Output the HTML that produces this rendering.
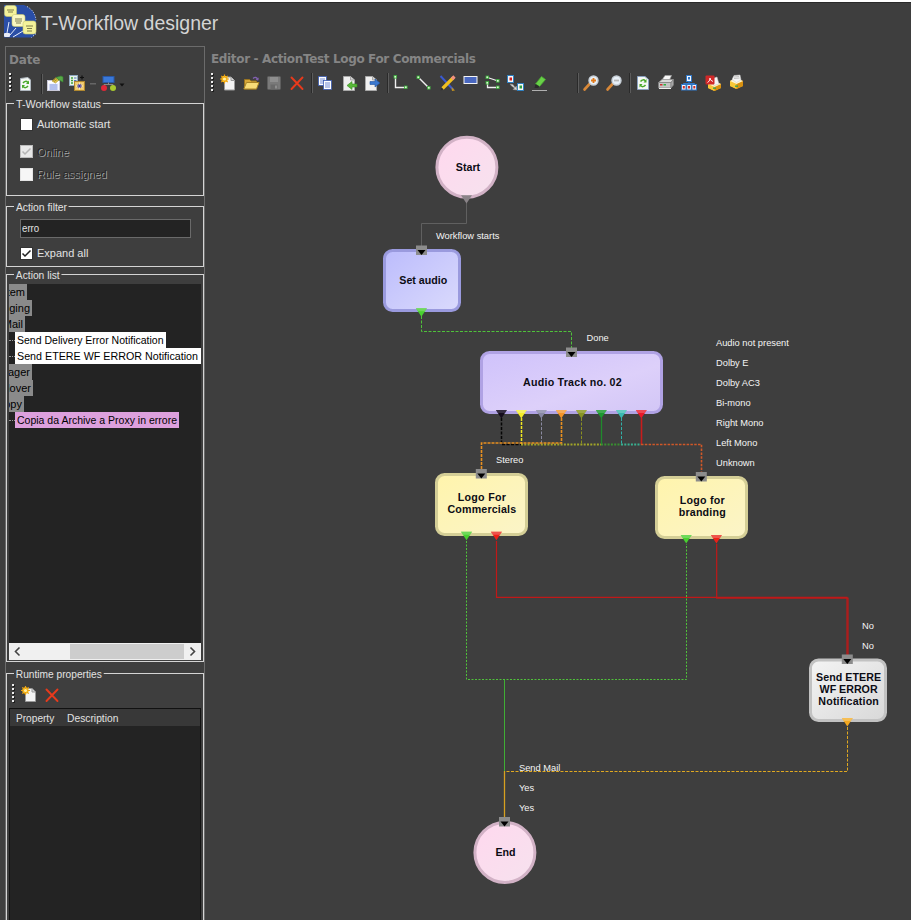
<!DOCTYPE html>
<html><head><meta charset="utf-8"><title>T-Workflow designer</title>
<style>
html,body{margin:0;padding:0;}
body{width:911px;height:920px;overflow:hidden;background:#3e3e3e;font-family:"Liberation Sans",sans-serif;font-size:12px;color:#e6e6e6;position:relative;}
.abs{position:absolute;}
#topstrip{left:0;top:0;width:911px;height:2px;background:#fff;}
#topdark{left:0;top:2px;width:911px;height:1px;background:#2a2a2a;}
#title{left:41px;top:11px;font-size:19.5px;color:#d4d4d4;white-space:nowrap;line-height:24px;}
#leftpanel{left:5px;top:46px;width:200px;height:900px;border:1px solid #6b6b6b;box-sizing:border-box;}
.hd{font-family:"DejaVu Sans","Liberation Sans",sans-serif;font-weight:bold;font-size:12px;color:#858585;white-space:nowrap;line-height:16px;}
.gb{border:1px solid #d4d4d4;box-sizing:border-box;}
.gbl{background:#3e3e3e;padding:0 2px;font-size:11px;transform-origin:0 0;line-height:14px;color:#e2e2e2;white-space:nowrap;}
.cb{width:13px;height:13px;background:#fff;border:1px solid #333;box-sizing:border-box;}
.lbl{font-size:11px;line-height:14px;white-space:nowrap;color:#e2e2e2;}
.row{height:16px;line-height:16px;font-size:11px;position:absolute;white-space:nowrap;color:#000;}
.g{background:#8a8a8a;overflow:hidden;}
.sx{position:absolute;transform-origin:0 0;transform:scaleX(0.955);white-space:nowrap;}
</style></head><body>
<div class="abs" id="topstrip"></div><div class="abs" id="topdark"></div>
<svg class="abs" style="left:3px;top:4px;" width="35" height="35" viewBox="0 0 35 35">
<path d="M1 1 H21 Q32 5 33 16 V30 L29 33.500 H1 Z" fill="#2a4ea6"/>
<path d="M24 2.500 Q32 7 33 16 M33 29.500 L28.500 33.500" fill="none" stroke="#e4eaf8" stroke-width="0.900" stroke-dasharray="1.200 1.500"/>
<path d="M6 18 L4 29 M13 24 L7 31 M20 27 L10 33" stroke="#e8eefc" stroke-width="1"/>
<rect x="1" y="29" width="6" height="4" rx="1" fill="#e8ecf8"/>
<rect x="1.500" y="1.500" width="12" height="11" rx="2.500" fill="#f4f29a" stroke="#c8c670" stroke-width="0.600"/>
<rect x="9" y="10.500" width="13" height="12" rx="2.500" fill="#f8f6c0" stroke="#c8c670" stroke-width="0.600"/>
<rect x="20" y="17" width="13" height="13" rx="2.500" fill="#f4f29a" stroke="#c8c670" stroke-width="0.600"/>
<path d="M4 6 H11 M5 8 H10 M12 15 H19 M12 17 H19 M13 19 H18 M23 22 H30 M24 24.500 H29 M24 27 H29" stroke="#3c3c1c" stroke-width="0.650"/>
</svg>
<div class="abs" id="title">T-Workflow designer</div>
<div class="abs" id="leftpanel"></div>
<div class="abs hd" style="left:9px;top:52px;letter-spacing:-0.2px;">Date</div>
<svg class="abs" style="left:0;top:680px;" width="100" height="26" viewBox="0 680 100 26"><rect x="13" y="685" width="2" height="2" fill="#1c1c1c"/><rect x="12" y="684" width="2" height="2" fill="#ececec"/><rect x="13" y="689" width="2" height="2" fill="#1c1c1c"/><rect x="12" y="688" width="2" height="2" fill="#ececec"/><rect x="13" y="693" width="2" height="2" fill="#1c1c1c"/><rect x="12" y="692" width="2" height="2" fill="#ececec"/><rect x="13" y="697" width="2" height="2" fill="#1c1c1c"/><rect x="12" y="696" width="2" height="2" fill="#ececec"/><rect x="13" y="701" width="2" height="2" fill="#1c1c1c"/><rect x="12" y="700" width="2" height="2" fill="#ececec"/><g transform="translate(21 686)"><path d="M4.500 2.500 H11 L14.500 6 V15.500 H4.500 Z" fill="#f4f4f4" stroke="#9a9a9a"/><path d="M11 2.500 V6 H14.500" fill="#d8d8d8" stroke="#9a9a9a"/><circle cx="4.500" cy="4.500" r="3.200" fill="#f8c820"/><path d="M4.500 0 V9 M0 4.500 H9 M1.300 1.300 L7.700 7.700 M7.700 1.300 L1.300 7.700" stroke="#f0a010" stroke-width="1.200"/><circle cx="4.500" cy="4.500" r="1.600" fill="#fff0a0"/></g><g transform="translate(44 687)"><path d="M2.500 2.500 L13.500 14 M13.500 2.500 L2.500 14" stroke="#e83a1c" stroke-width="1.900" stroke-linecap="round"/></g></svg>
<!-- status group -->
<div class="abs gb" style="left:6px;top:103px;width:198px;height:93px;"></div>
<div class="abs gbl" style="left:14px;top:97px;transform:scaleX(0.975);">T-Workflow status</div>
<div class="abs cb" style="left:20px;top:118px;"></div><div class="abs lbl" style="left:37px;top:117px;">Automatic start</div>
<div class="abs cb" style="left:20px;top:145px;background:#e8e8e8;border-color:#bcbcbc;"><svg width="11" height="11" style="display:block"><path d="M1.500 5.500 L4 8 L9.500 2.500" fill="none" stroke="#b4b4b4" stroke-width="1.500"/></svg></div><div class="abs lbl" style="left:37px;top:145px;color:#262626;text-shadow:1px 1px 0 #a4a4a4;">Online</div>
<div class="abs cb" style="left:20px;top:168px;background:#f6f6f6;border-color:#e4e4e4;"></div><div class="abs lbl" style="left:37px;top:167px;color:#262626;text-shadow:1px 1px 0 #a4a4a4;">Rule assigned</div>
<!-- filter group -->
<div class="abs gb" style="left:6px;top:206px;width:198px;height:61px;"></div>
<div class="abs gbl" style="left:14px;top:200px;transform:scaleX(0.94);">Action filter</div>
<div class="abs" style="left:20px;top:219px;width:171px;height:19px;background:#232323;border:1px solid #6a6a6a;box-sizing:border-box;"></div>
<div class="abs lbl" style="left:22px;top:221px;transform-origin:0 0;transform:scaleX(0.88);">erro</div>
<div class="abs cb" style="left:20px;top:247px;"><svg width="11" height="11" style="display:block"><path d="M1.500 5.500 L4 8 L9.500 2.500" fill="none" stroke="#222" stroke-width="1.500"/></svg></div><div class="abs lbl" style="left:37px;top:246px;">Expand all</div>
<!-- action list -->
<div class="abs gb" style="left:6px;top:274px;width:198px;height:388px;"></div>
<div class="abs gbl" style="left:14px;top:268px;transform:scaleX(0.93);">Action list</div>
<div class="abs" id="alist" style="left:9px;top:284px;width:192px;height:359px;background:#232323;overflow:hidden;">
<div class="row g" style="left:0;top:0;width:18px;"><span style="position:absolute;right:2px;">stem</span></div>
<div class="row g" style="left:0;top:16px;width:23px;"><span style="position:absolute;right:2px;">gging</span></div>
<div class="row g" style="left:0;top:32px;width:16px;"><span style="position:absolute;right:2px;">Mail</span></div>
<div class="row" style="left:0;top:56px;width:6px;height:0;border-top:1px dotted #999;"></div>
<div class="row" style="left:6px;top:48px;width:151px;background:#fff;color:#000;"><span class="sx" style="left:2px;">Send Delivery Error Notification</span></div>
<div class="row" style="left:0;top:72px;width:6px;height:0;border-top:1px dotted #999;"></div>
<div class="row" style="left:6px;top:64px;width:186px;background:#fff;color:#000;"><span class="sx" style="left:2px;transform:scaleX(0.974);">Send ETERE WF ERROR Notification</span></div>
<div class="row g" style="left:0;top:80px;width:23px;"><span style="position:absolute;right:2px;">nager</span></div>
<div class="row g" style="left:0;top:96px;width:24px;"><span style="position:absolute;right:2px;">llover</span></div>
<div class="row g" style="left:0;top:112px;width:15px;"><span style="position:absolute;right:2px;">opy</span></div>
<div class="row" style="left:0;top:136px;width:6px;height:0;border-top:1px dotted #999;"></div>
<div class="row" style="left:6px;top:128px;width:164px;background:#dda0dd;color:#000;"><span class="sx" style="left:2px;">Copia da Archive a Proxy in errore</span></div>
</div>
<div class="abs" style="left:9px;top:643px;width:192px;height:17px;background:#f0f0f0;"></div>
<div class="abs" style="left:70px;top:644px;width:114px;height:15px;background:#cdcdcd;"></div>
<svg class="abs" style="left:9px;top:643px;" width="192" height="17"><path d="M10.500 4.500 L6.500 8.500 L10.500 12.500 M181.500 4.500 L185.500 8.500 L181.500 12.500" fill="none" stroke="#444" stroke-width="1.6"/></svg>
<!-- runtime -->
<div class="abs gb" style="left:6px;top:673px;width:198px;height:260px;"></div>
<div class="abs gbl" style="left:14px;top:667px;transform:scaleX(0.925);">Runtime properties</div>
<div class="abs" style="left:9px;top:708px;width:192px;height:230px;background:#232323;border:1px solid #111;box-sizing:border-box;"></div>
<div class="abs" style="left:10px;top:709px;width:190px;height:17px;background:#383838;"></div>
<div class="abs lbl" style="left:16px;top:711px;transform-origin:0 0;transform:scaleX(0.92);">Property</div><div class="abs lbl" style="left:67px;top:711px;transform-origin:0 0;transform:scaleX(0.935);">Description</div>
<!-- editor -->
<div class="abs hd" style="left:211px;top:51px;letter-spacing:-0.35px;">Editor - ActionTest Logo For Commercials</div>
<svg class="abs" id="toolbars" style="left:0;top:70px;" width="911" height="28" viewBox="0 70 911 28"><rect x="10" y="74" width="2" height="2" fill="#1c1c1c"/><rect x="9" y="73" width="2" height="2" fill="#ececec"/><rect x="10" y="78" width="2" height="2" fill="#1c1c1c"/><rect x="9" y="77" width="2" height="2" fill="#ececec"/><rect x="10" y="82" width="2" height="2" fill="#1c1c1c"/><rect x="9" y="81" width="2" height="2" fill="#ececec"/><rect x="10" y="86" width="2" height="2" fill="#1c1c1c"/><rect x="9" y="85" width="2" height="2" fill="#ececec"/><rect x="10" y="90" width="2" height="2" fill="#1c1c1c"/><rect x="9" y="89" width="2" height="2" fill="#ececec"/><g transform="translate(19 76)"><path d="M1.500 2.500 L9 1.500 L11.500 4 V14.500 H1.500 Z" fill="#f4f8f4" stroke="#b0b8c0"/><path d="M4 7 Q6.500 4 9 6.500 M9 10 Q6.500 13 4 10.500" fill="none" stroke="#48a828" stroke-width="1.500"/><path d="M10 4.500 V8 H7 Z M3 12.500 V9 H6 Z" fill="#48a828"/></g><rect x="41" y="74" width="1" height="20" fill="#2a2a2a"/><rect x="42" y="74" width="1" height="20" fill="#5c5c5c"/><g transform="translate(47 75)"><rect x="0.500" y="5.500" width="12" height="10" fill="#f4f6ff" stroke="#c8c8d8"/><rect x="1" y="6" width="11" height="2" fill="#fff"/><path d="M2.500 10 H10.500 M2.500 12 H10.500 M2.500 14 H10.500" stroke="#5070d0" stroke-width="0.800"/><path d="M5 6 L9 2.500 L12 5 L8.500 8 Z" fill="#e8c848" stroke="#a08828" stroke-width="0.600"/><path d="M9 2.500 L14 1 L16 2 V7 L12 5 Z" fill="#58a848" stroke="#388830" stroke-width="0.600"/><path d="M6 5.500 L9 3.500 M7 6.500 L10 4.500" stroke="#7a6820" stroke-width="0.600"/></g><g transform="translate(69 75)"><rect x="0.500" y="0.500" width="8" height="10" fill="#e8f4e8" stroke="#90a8c0"/><path d="M2 3 H4 M2 5.500 H4 M2 8 H4" stroke="#40a040" stroke-width="1.400"/><path d="M5 3 H7.500 M5 5.500 H7.500 M5 8 H7.500" stroke="#5070c0" stroke-width="1"/><rect x="5.500" y="6.500" width="10" height="9" fill="#f0c868" stroke="#b08830"/><circle cx="10.500" cy="11" r="2.300" fill="#302060"/><path d="M10.500 7.500 V14.500 M7 11 H14 M8 8.500 L13 13.500 M13 8.500 L8 13.500" stroke="#fff" stroke-width="0.700"/><circle cx="10.500" cy="11" r="1.200" fill="#4030a0"/><path d="M11 2.500 H15 M13 0.500 V4.500" stroke="#101010" stroke-width="1.200"/></g><rect x="90" y="83" width="6" height="1.500" fill="#666"/><g transform="translate(100 76)"><rect x="3" y="0.500" width="11" height="6" fill="#3a78d8" stroke="#2858a8"/><path d="M8.500 6.500 V8.500 M4 10 V8.500 H13 V10" fill="none" stroke="#888"/><circle cx="4" cy="12" r="3" fill="#e02838"/><circle cx="13" cy="12" r="3" fill="#a8c830"/></g><path d="M119.500 83.500 H124.500 L122 86.500 Z" fill="#101010"/><rect x="212" y="74" width="2" height="2" fill="#1c1c1c"/><rect x="211" y="73" width="2" height="2" fill="#ececec"/><rect x="212" y="78" width="2" height="2" fill="#1c1c1c"/><rect x="211" y="77" width="2" height="2" fill="#ececec"/><rect x="212" y="82" width="2" height="2" fill="#1c1c1c"/><rect x="211" y="81" width="2" height="2" fill="#ececec"/><rect x="212" y="86" width="2" height="2" fill="#1c1c1c"/><rect x="211" y="85" width="2" height="2" fill="#ececec"/><rect x="212" y="90" width="2" height="2" fill="#1c1c1c"/><rect x="211" y="89" width="2" height="2" fill="#ececec"/><g transform="translate(220 74.5)"><path d="M4.500 2.500 H11 L14.500 6 V15.500 H4.500 Z" fill="#f4f4f4" stroke="#9a9a9a"/><path d="M11 2.500 V6 H14.500" fill="#d8d8d8" stroke="#9a9a9a"/><circle cx="4.500" cy="4.500" r="3.200" fill="#f8c820"/><path d="M4.500 0 V9 M0 4.500 H9 M1.300 1.300 L7.700 7.700 M7.700 1.300 L1.300 7.700" stroke="#f0a010" stroke-width="1.200"/><circle cx="4.500" cy="4.500" r="1.600" fill="#fff0a0"/></g><g transform="translate(243 75)"><path d="M1.500 4.500 H6.500 L8 6 H13.500 V14 H1.500 Z" fill="#d8a838" stroke="#9a7420"/><path d="M0.800 14 L3.500 7.500 H16 L13.500 14 Z" fill="#f8dc78" stroke="#a88428"/><path d="M10 3.500 Q13 1 15 4.500" fill="none" stroke="#8060b0" stroke-width="1.300"/><path d="M15.800 2.500 L15.200 5.800 L12.600 4.600 Z" fill="#8060b0"/></g><g transform="translate(266 75)"><rect x="1.500" y="1.500" width="13" height="13" rx="1" fill="#7a7a7a" stroke="#5e5e5e"/><rect x="4" y="2" width="8" height="5" fill="#8e8e8e"/><rect x="4.500" y="9.500" width="7" height="5" fill="#6a6a6a"/><rect x="9" y="10.500" width="2" height="3" fill="#8e8e8e"/></g><g transform="translate(289 75)"><path d="M2.500 2.500 L13.500 14 M13.500 2.500 L2.500 14" stroke="#e83a1c" stroke-width="1.900" stroke-linecap="round"/></g><rect x="311" y="73" width="1" height="20" fill="#2a2a2a"/><rect x="312" y="73" width="1" height="20" fill="#5c5c5c"/><g transform="translate(317 75)"><rect x="1.500" y="1.500" width="8" height="9" fill="#fff" stroke="#3a5ab0" stroke-width="0.800"/><path d="M3 4 H8 M3 6 H8 M3 8 H8" stroke="#4a6ac8" stroke-width="0.800"/><rect x="6.500" y="5.500" width="8" height="9" fill="#fff" stroke="#3a5ab0" stroke-width="0.800"/><path d="M8 8 H13 M8 10 H13 M8 12 H13" stroke="#4a6ac8" stroke-width="0.800"/></g><g transform="translate(341 75)"><path d="M2.500 1.500 H9.500 L13.500 5 V15.500 H2.500 Z" fill="#f0f0f0" stroke="#a8a8a8"/><path d="M9.500 1.500 V5 H13.500" fill="#d4d4d4" stroke="#a8a8a8"/><path d="M16 9 H11 V6.500 L6 10.500 L11 14.500 V12 H16 Z" fill="#58b838" stroke="#3a8a24" stroke-width="0.600"/></g><g transform="translate(364 75)"><path d="M1.500 1.500 H8.500 L12.500 5 V15.500 H1.500 Z" fill="#f0f0f0" stroke="#a8a8a8"/><path d="M8.500 1.500 V5 H12.500" fill="#d4d4d4" stroke="#a8a8a8"/><path d="M6 6.500 H11 V4 L16 8 L11 12 V9.500 H6 Z" fill="#3a78d0" stroke="#2050a0" stroke-width="0.600"/></g><rect x="387" y="73" width="1" height="20" fill="#2a2a2a"/><rect x="388" y="73" width="1" height="20" fill="#5c5c5c"/><g transform="translate(393 75)"><path d="M2.500 2 V12.500 H13" fill="none" stroke="#f0f0f0" stroke-width="1.400"/><rect x="1" y="0.500" width="2.600" height="2.600" fill="#d8f8d0" stroke="#38a838" stroke-width="0.800"/><rect x="11.500" y="11" width="2.600" height="2.600" fill="#d8f8d0" stroke="#38a838" stroke-width="0.800"/></g><g transform="translate(416 75)"><path d="M2.500 2.500 L13 13" fill="none" stroke="#f0f0f0" stroke-width="1.400"/><rect x="1" y="1" width="2.600" height="2.600" fill="#d8f8d0" stroke="#38a838" stroke-width="0.800"/><rect x="11.500" y="11.500" width="2.600" height="2.600" fill="#d8f8d0" stroke="#38a838" stroke-width="0.800"/></g><g transform="translate(439 75)"><path d="M1.500 1 L14 14.500" stroke="#3a5ad0" stroke-width="2"/><path d="M14.500 2.500 L3.500 13.500" stroke="#f0c020" stroke-width="3.200"/><path d="M15.500 1.500 L13 4" stroke="#f09080" stroke-width="3.200"/><path d="M1.500 15.500 L4.500 14.500 L2.500 12.500 Z" fill="#303030"/><path d="M12.500 12 L16 15.500 L13 16 Z" fill="#c09020"/></g><g transform="translate(463 75)"><rect x="1" y="1.500" width="13" height="7" fill="#4a68c0" stroke="#f4f4f4" stroke-width="1"/></g><g transform="translate(485 75)"><path d="M2.500 2.500 L13 6 M2.500 8 V12.500 H13" fill="none" stroke="#f0f0f0" stroke-width="1.300"/><rect x="1" y="1" width="2.600" height="2.600" fill="#d8f8d0" stroke="#38a838" stroke-width="0.800"/><rect x="11.500" y="4.500" width="2.600" height="2.600" fill="#d8f8d0" stroke="#38a838" stroke-width="0.800"/><rect x="1" y="6.500" width="2.600" height="2.600" fill="#d8f8d0" stroke="#38a838" stroke-width="0.800"/><rect x="11.500" y="11" width="2.600" height="2.600" fill="#d8f8d0" stroke="#38a838" stroke-width="0.800"/></g><g transform="translate(507 75)"><rect x="0.500" y="0.500" width="6" height="7" fill="#f8f8f8" stroke="#3080c0"/><rect x="2.500" y="2.500" width="2.500" height="3" fill="#d02020"/><rect x="10.500" y="8.500" width="6" height="7" fill="#f8f8f8" stroke="#3080c0"/><rect x="12.500" y="10.500" width="2.500" height="3" fill="#30a040"/><path d="M3 9 L6 9.500 L8 12.500 L9.500 11 L10 15 L6 14.500 L7.500 13 L4.500 11 Z" fill="#d8d8d8" stroke="#909090" stroke-width="0.500"/></g><g transform="translate(532 75)"><path d="M9.500 1.500 L13.500 4.500 L7.500 11.500 L3.500 9 Z" fill="#68d048" stroke="#48a830" stroke-width="0.800"/><path d="M3.500 9 L7.500 11.500 L6 13 H2.500 Z" fill="#2a2a2a"/><path d="M0 15.500 H15" stroke="#b0b0b0" stroke-width="1"/></g><rect x="577" y="73" width="1" height="20" fill="#2a2a2a"/><rect x="578" y="73" width="1" height="20" fill="#5c5c5c"/><g transform="translate(583 75)"><path d="M1.500 14.500 L7 8.500" stroke="#d88838" stroke-width="2.600" stroke-linecap="round"/><circle cx="10.500" cy="5.500" r="4.500" fill="#e8f0f8" stroke="#c8d0d8" stroke-width="1.400"/><path d="M8 5.500 H13 M10.500 3 V8" stroke="#e07818" stroke-width="1.800"/></g><g transform="translate(606 75)"><path d="M1.500 14.500 L7 8.500" stroke="#d88838" stroke-width="2.600" stroke-linecap="round"/><circle cx="10.500" cy="5.500" r="4.500" fill="#e8f0f8" stroke="#c8d0d8" stroke-width="1.400"/><path d="M8 5.500 H13" stroke="#b8b8b8" stroke-width="1.800"/></g><rect x="629" y="73" width="1" height="20" fill="#2a2a2a"/><rect x="630" y="73" width="1" height="20" fill="#5c5c5c"/><g transform="translate(637 75)"><path d="M0.500 1.500 H8 L11.500 4.500 V14.500 H0.500 Z" fill="#f4f8f4" stroke="#8aa0c0"/><path d="M3.500 6.500 Q6 3.500 8.500 6 M8.500 10 Q6 13 3.500 10.500" fill="none" stroke="#48a828" stroke-width="1.500"/><path d="M9.500 4 V7.500 H6.500 Z M2.500 12.500 V9 H5.500 Z" fill="#48a828"/></g><g transform="translate(658 75)"><path d="M4 5 L7 0.500 H13.500 L11.500 5 Z" fill="#f8f8f8" stroke="#a0a0a0" stroke-width="0.700"/><path d="M0.500 7.500 L4 4.500 H15.500 L13 7.500 Z" fill="#d8d8d8" stroke="#909090" stroke-width="0.700"/><path d="M0.500 7.500 H13 V13 H0.500 Z" fill="#c4c4c4" stroke="#808080" stroke-width="0.700"/><path d="M13 7.500 L15.500 4.500 V10 L13 13 Z" fill="#a8a8a8" stroke="#808080" stroke-width="0.700"/><rect x="2" y="9" width="2.500" height="1.500" fill="#d03030"/><rect x="5.500" y="9" width="2.500" height="1.500" fill="#30b040"/><path d="M1 13.500 H13" stroke="#f0f0f0"/></g><g transform="translate(681 75)"><rect x="5.500" y="0.500" width="5" height="6" fill="#f4f8ff" stroke="#3078c8"/><rect x="7" y="2" width="2" height="2.500" fill="#3078c8"/><path d="M8 6.500 V8.500 M2.500 10 V8.500 H13.500 V10 M8 8.500 V10" fill="none" stroke="#3078c8"/><rect x="0.500" y="9.500" width="4.500" height="5.500" fill="#f4f8ff" stroke="#3078c8"/><rect x="5.800" y="9.500" width="4.500" height="5.500" fill="#f4f8ff" stroke="#3078c8"/><rect x="11" y="9.500" width="4.500" height="5.500" fill="#f4f8ff" stroke="#3078c8"/><rect x="1.800" y="11" width="2" height="2.500" fill="#d03028"/><rect x="7" y="11" width="2" height="2.500" fill="#d03028"/><rect x="12.300" y="11" width="2" height="2.500" fill="#d03028"/></g><g transform="translate(705 75)"><path d="M3 9 L9 6 L16 9 V13 L9.500 16 L3 13 Z" fill="#f0b020"/><path d="M3 9 L9.500 12 V16 L3 13 Z" fill="#f8c838"/><path d="M9.500 12 L16 9 V13 L9.500 16 Z" fill="#d89010"/><path d="M3 9 L9 6 L16 9 L9.500 12 Z" fill="#fff0c0"/><path d="M6 4 L12 2 L14 9 L9 10.500 Z" fill="#f4f4f4" stroke="#c0c0c0" stroke-width="0.500"/><rect x="0.500" y="0.500" width="9" height="9" rx="1" fill="#d02828"/><path d="M2.500 7.500 Q5 6.500 5 3 Q5 5.500 8 6.500" fill="none" stroke="#fff" stroke-width="0.900"/><rect x="8" y="12.500" width="3" height="1.300" fill="#30a050"/></g><g transform="translate(728 74)"><path d="M2 7 L8 4 L15 7 V12 L8.500 15 L2 12 Z" fill="#f0b020"/><path d="M2 7 L8.500 10 V15 L2 12 Z" fill="#f8c838"/><path d="M8.500 10 L15 7 V12 L8.500 15 Z" fill="#d89010"/><path d="M2 7 L8 4 L15 7 L8.500 10 Z" fill="#fff4d0"/><path d="M4 5.500 L6 1.500 L12 1 L13 6 L8.500 8.500 Z" fill="#f4f4f4" stroke="#c8c8c8" stroke-width="0.500"/><path d="M6 3 L11 2.500 M6 4.500 L11.500 4" stroke="#a0a0a0" stroke-width="0.600"/><rect x="7" y="11.500" width="3" height="1.300" fill="#30a050"/></g></svg>
<svg class="abs" id="diagram" style="left:0;top:0;" width="911" height="920" viewBox="0 0 911 920" font-family="Liberation Sans, sans-serif">
<defs>
<linearGradient id="gPink" x1="0" y1="0" x2="1" y2="1"><stop offset="0" stop-color="#ffd8ee"/><stop offset="1" stop-color="#f6e2ee"/></linearGradient>
<linearGradient id="gBlue" x1="0" y1="0" x2="1" y2="1"><stop offset="0" stop-color="#bcbcfc"/><stop offset="1" stop-color="#dadafc"/></linearGradient>
<linearGradient id="gLav" x1="0" y1="0" x2="1" y2="1"><stop offset="0" stop-color="#cfc2fb"/><stop offset="0.6" stop-color="#ddd0fa"/><stop offset="1" stop-color="#d2c6f6"/></linearGradient>
<linearGradient id="gYel" x1="0" y1="0" x2="1" y2="1"><stop offset="0" stop-color="#fff4ac"/><stop offset="1" stop-color="#fbf4c8"/></linearGradient>
<linearGradient id="gGray" x1="0" y1="0" x2="1" y2="1"><stop offset="0" stop-color="#f4f4f4"/><stop offset="1" stop-color="#d8d8d8"/></linearGradient>
</defs>
<!-- connector lines -->
<g fill="none" stroke-width="1">
<path d="M466.500 203 V223.500 H421.500 V247" stroke="#606060"/>
<path d="M421.500 316 V331.500 H571.500 V349" stroke="#4fc23a" stroke-dasharray="3 1.500"/>
<path d="M501.500 418 V444.500 H521" stroke="#050505" stroke-width="1.500" stroke-dasharray="3 1.500"/>
<path d="M541.500 418 V444" stroke="#8a8aa0" stroke-dasharray="3 1.500"/>
<path d="M521 444.500 H601" stroke="#a0a428" stroke-width="2" stroke-dasharray="2 1.300"/>
<path d="M601 444.500 H621" stroke="#389030" stroke-width="2" stroke-dasharray="2 1.300"/>
<path d="M621 444.500 H641" stroke="#38b090" stroke-width="2" stroke-dasharray="2 1.300"/>
<path d="M521.500 418 V444" stroke="#f0e820" stroke-width="1.500" stroke-dasharray="3 1"/>
<path d="M581.500 418 V444" stroke="#8a9020" stroke-dasharray="3 1.500"/>
<path d="M601.500 418 V444" stroke="#1f8a2c" stroke-width="1.300"/>
<path d="M621.500 418 V444" stroke="#30b0a8" stroke-dasharray="3 1.500"/>
<path d="M561.500 418 V443 H481.500 V470" stroke="#e89020" stroke-width="1.600" stroke-dasharray="3 1"/>
<path d="M641.500 418 V445" stroke="#c81c1c" stroke-width="1.600"/>
<path d="M641 444.500 H701.500 V473" stroke="#d05828" stroke-width="1.600" stroke-dasharray="2.500 1.300"/>
<path d="M496.500 541 V597.300 H847 V656" stroke="#c01818" stroke-width="1.200"/>
<path d="M716.700 544 V598.200 H848 V656" stroke="#c01818" stroke-width="1.200"/>
<path d="M466.500 541 V679.500 H686.500 V544" stroke="#4fc23a" stroke-dasharray="2 1.500"/>
<path d="M504.500 680 V771" stroke="#3fae34"/>
<path d="M847.500 727 V771.500 H504" stroke="#e0a820" stroke-dasharray="3 1.500"/>
<path d="M504.500 771 V819" stroke="#d8a020" stroke-width="1.300"/>
</g>
<circle cx="466.900" cy="167.200" r="30" fill="url(#gPink)" stroke="#d2b2c6" stroke-width="3"/>
<text x="468" y="170.800" font-size="10.670" font-weight="bold" fill="#0c0c14" text-anchor="middle">Start</text>
<path d="M461 195.300 H472 L466.500 203.500 Z" fill="#8a8488"/>
<rect x="384.5" y="250.5" width="75" height="60" rx="8" fill="url(#gBlue)" stroke="#9a9ade" stroke-width="3"/>
<text x="423.3" y="283.7" font-size="10.670" font-weight="bold" fill="#0c0c14" text-anchor="middle" textLength="48" lengthAdjust="spacing">Set audio</text>
<rect x="481.5" y="352.5" width="180" height="60" rx="8" fill="url(#gLav)" stroke="#b0a2e4" stroke-width="3"/>
<text x="572.4" y="385.7" font-size="10.670" font-weight="bold" fill="#0c0c14" text-anchor="middle" textLength="98.6" lengthAdjust="spacing">Audio Track no. 02</text>
<rect x="436.5" y="474.5" width="90" height="60" rx="8" fill="url(#gYel)" stroke="#d4ce96" stroke-width="3"/>
<text x="481.8" y="500.6" font-size="10.670" font-weight="bold" fill="#0c0c14" text-anchor="middle" textLength="48.2" lengthAdjust="spacing">Logo For</text>
<text x="481.8" y="512.5" font-size="10.670" font-weight="bold" fill="#0c0c14" text-anchor="middle" textLength="68.8" lengthAdjust="spacing">Commercials</text>
<rect x="656.5" y="477.5" width="90" height="60" rx="8" fill="url(#gYel)" stroke="#d4ce96" stroke-width="3"/>
<text x="702.2" y="503.8" font-size="10.670" font-weight="bold" fill="#0c0c14" text-anchor="middle" textLength="45" lengthAdjust="spacing">Logo for</text>
<text x="702.2" y="516" font-size="10.670" font-weight="bold" fill="#0c0c14" text-anchor="middle" textLength="47" lengthAdjust="spacing">branding</text>
<rect x="810.5" y="660.0" width="75" height="60.5" rx="8" fill="url(#gGray)" stroke="#c2c2c2" stroke-width="3"/>
<text x="848.6" y="680.6" font-size="10.670" font-weight="bold" fill="#0c0c14" text-anchor="middle" textLength="65" lengthAdjust="spacing">Send ETERE</text>
<text x="848.6" y="692.7" font-size="10.670" font-weight="bold" fill="#0c0c14" text-anchor="middle" textLength="58" lengthAdjust="spacing">WF ERROR</text>
<text x="848.6" y="704.7" font-size="10.670" font-weight="bold" fill="#0c0c14" text-anchor="middle" textLength="60.5" lengthAdjust="spacing">Notification</text>
<circle cx="504.900" cy="852.400" r="30" fill="url(#gPink)" stroke="#d2b2c6" stroke-width="3"/>
<text x="505.500" y="855.700" font-size="10.670" font-weight="bold" fill="#0c0c14" text-anchor="middle">End</text>

<g id="inputs">
<rect x="416.0" y="245.5" width="11" height="9.500" fill="#8c8c8c"/><path d="M417.5 250.0 H425.5 L421.5 255.0 Z" fill="#000"/>
<rect x="566.0" y="347.5" width="11" height="9.500" fill="#8c8c8c"/><path d="M567.5 352.0 H575.5 L571.5 357.0 Z" fill="#000"/>
<rect x="475.8" y="469" width="11" height="9.500" fill="#8c8c8c"/><path d="M477.3 473.5 H485.3 L481.3 478.5 Z" fill="#000"/>
<rect x="695.8" y="472" width="11" height="9.500" fill="#8c8c8c"/><path d="M697.3 476.5 H705.3 L701.3 481.5 Z" fill="#000"/>
<rect x="841.8" y="654.5" width="11" height="9.500" fill="#8c8c8c"/><path d="M843.3 659.0 H851.3 L847.3 664.0 Z" fill="#000"/>
<rect x="499.0" y="817" width="11" height="9.500" fill="#8c8c8c"/><path d="M500.5 821.5 H508.5 L504.5 826.5 Z" fill="#000"/>
</g>
<g id="outputs">
<path d="M415.9 308.3 H426.9 L421.4 316.8 Z" fill="#48d030"/><path d="M415.9 308.3 H426.9 L424.9 311.3 H417.9 Z" fill="#90e080" opacity="0.55"/>
<path d="M495.9 410 H506.9 L501.4 418.5 Z" fill="#140c1c"/><path d="M495.9 410 H506.9 L504.9 413 H497.9 Z" fill="#504860" opacity="0.55"/>
<path d="M515.8 410 H526.8 L521.3 418.5 Z" fill="#f4ec28"/><path d="M515.8 410 H526.8 L524.8 413 H517.8 Z" fill="#f8f490" opacity="0.55"/>
<path d="M535.8 410 H546.8 L541.3 418.5 Z" fill="#8888a4"/><path d="M535.8 410 H546.8 L544.8 413 H537.8 Z" fill="#b0b0c8" opacity="0.55"/>
<path d="M555.8 410 H566.8 L561.3 418.5 Z" fill="#f49428"/><path d="M555.8 410 H566.8 L564.8 413 H557.8 Z" fill="#f8c080" opacity="0.55"/>
<path d="M575.9 410 H586.9 L581.4 418.5 Z" fill="#889424"/><path d="M575.9 410 H586.9 L584.9 413 H577.9 Z" fill="#b0b860" opacity="0.55"/>
<path d="M595.8 410 H606.8 L601.3 418.5 Z" fill="#1c9830"/><path d="M595.8 410 H606.8 L604.8 413 H597.8 Z" fill="#60b870" opacity="0.55"/>
<path d="M615.9 410 H626.9 L621.4 418.5 Z" fill="#38b8b0"/><path d="M615.9 410 H626.9 L624.9 413 H617.9 Z" fill="#88d8d0" opacity="0.55"/>
<path d="M635.8 410 H646.8 L641.3 418.5 Z" fill="#e81828"/><path d="M635.8 410 H646.8 L644.8 413 H637.8 Z" fill="#f07078" opacity="0.55"/>
<path d="M461.0 531.7 H472.0 L466.5 540.2 Z" fill="#48d030"/><path d="M461.0 531.7 H472.0 L470.0 534.7 H463.0 Z" fill="#90e080" opacity="0.55"/>
<path d="M490.9 531.7 H501.9 L496.4 540.2 Z" fill="#ec2018"/><path d="M490.9 531.7 H501.9 L499.9 534.7 H492.9 Z" fill="#f08078" opacity="0.55"/>
<path d="M680.7 535 H691.7 L686.2 543.5 Z" fill="#48d030"/><path d="M680.7 535 H691.7 L689.7 538 H682.7 Z" fill="#90e080" opacity="0.55"/>
<path d="M710.9 535 H721.9 L716.4 543.5 Z" fill="#ec2018"/><path d="M710.9 535 H721.9 L719.9 538 H712.9 Z" fill="#f08078" opacity="0.55"/>
<path d="M841.8 718 H852.8 L847.3 726.5 Z" fill="#f4a820"/><path d="M841.8 718 H852.8 L850.8 721 H843.8 Z" fill="#f8d080" opacity="0.55"/>
</g>
<g font-size="9.300" fill="#f4f4f4">
<text x="436" y="239">Workflow starts</text>
<text x="586.500" y="341.300">Done</text>
<text x="716" y="346.300">Audio not present</text>
<text x="716" y="366.300">Dolby E</text>
<text x="716" y="386.300">Dolby AC3</text>
<text x="716" y="406.300">Bi-mono</text>
<text x="716" y="426.300">Right Mono</text>
<text x="716" y="446.300">Left Mono</text>
<text x="716" y="466.200">Unknown</text>
<text x="496" y="463">Stereo</text>
<text x="862" y="629">No</text>
<text x="862" y="648.800">No</text>
<text x="519" y="771">Send Mail</text>
<text x="519" y="790.800">Yes</text>
<text x="519" y="810.700">Yes</text>
</g>
</svg>
</body></html>
